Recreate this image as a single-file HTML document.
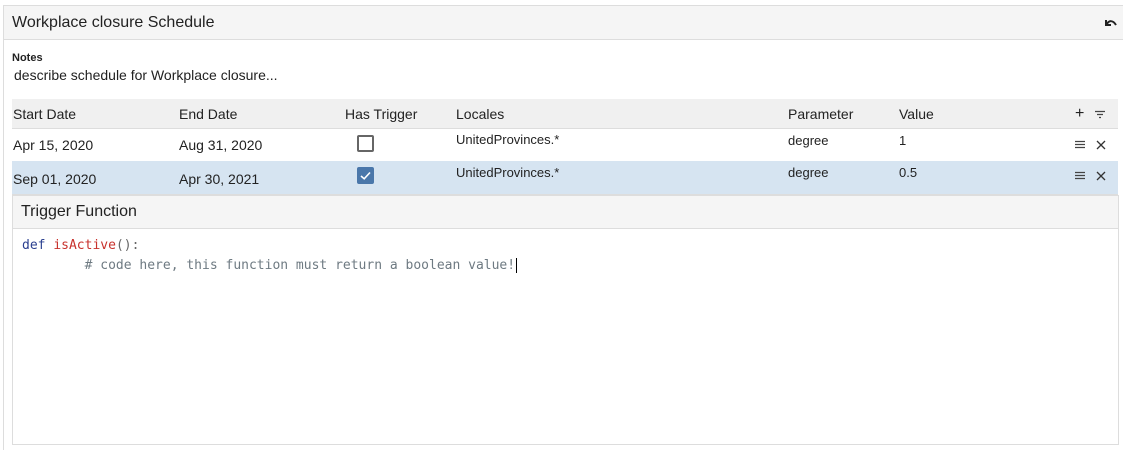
<!DOCTYPE html><html><head><style>
html,body{margin:0;width:1123px;height:450px;overflow:hidden}
body{background:#fff;font-family:"Liberation Sans",sans-serif;color:#222;position:relative}
.card{position:absolute;left:3px;top:5px;width:1120px;height:445px;border:1px solid #ddd;border-right:none;border-bottom:none;box-sizing:border-box}
.hd{position:absolute;left:0;top:0;right:0;height:33px;background:#f5f5f5;border-bottom:1px solid #ddd;font-size:16px;line-height:33px;padding-left:8px}
.a{position:absolute;white-space:nowrap}
.th{position:absolute;left:12px;top:99px;width:1106px;height:29px;background:#f0f0f0;border-bottom:1px solid #ddd}
.r2{position:absolute;left:12px;top:161px;width:1106px;height:33px;background:#d6e4f1;border-bottom:1px solid #ddd}
.ed{position:absolute;left:12px;top:195px;width:1107px;height:250px;border:1px solid #ddd;box-sizing:border-box}
.edh{height:32px;background:#f5f5f5;border-bottom:1px solid #ddd;font-size:16px;line-height:32px;padding-left:8px}
.code{font-family:"DejaVu Sans Mono","Liberation Mono",monospace;font-size:13px;position:absolute;left:9px;white-space:pre}
.cb{position:absolute;left:357px;width:17px;height:17px;box-sizing:border-box;border:2px solid #666;border-radius:2px}
</style></head><body>
<div class="card"><div class="hd">Workplace closure Schedule</div>
<svg class="a" style="left:1099px;top:10px" width="16" height="14" viewBox="0 0 16 14"><path d="M3 4 L3 9 L8 9 M3.5 8.5 C6 4 10 4 13 9" fill="none" stroke="#222" stroke-width="2"/></svg>
</div>
<div class="a" style="left:12px;top:52px;font-size:11px;font-weight:bold">Notes</div>
<div class="a" style="left:14px;top:67px;font-size:14px">describe schedule for Workplace closure...</div>
<div class="th"></div><div class="r2"></div>
<div class="a" style="left:13px;top:106px;font-size:14px">Start Date</div>
<div class="a" style="left:179px;top:106px;font-size:14px">End Date</div>
<div class="a" style="left:345px;top:106px;font-size:14px">Has Trigger</div>
<div class="a" style="left:456px;top:106px;font-size:14px">Locales</div>
<div class="a" style="left:788px;top:106px;font-size:14px">Parameter</div>
<div class="a" style="left:899px;top:106px;font-size:14px">Value</div>
<div class="a" style="left:1075px;top:105px;font-size:16px">+</div>
<svg class="a" style="left:1094px;top:110px" width="12" height="9"><path d="M1 1.5H11M3 4.5H9M5 7.5H7" stroke="#444" stroke-width="1.2"/></svg>
<div class="a" style="left:13px;top:137px;font-size:14px">Apr 15, 2020</div>
<div class="a" style="left:179px;top:137px;font-size:14px">Aug 31, 2020</div>
<div class="cb" style="top:135px"></div>
<div class="a" style="left:456px;top:132px;font-size:13px">UnitedProvinces.*</div>
<div class="a" style="left:788px;top:133px;font-size:13px">degree</div>
<div class="a" style="left:899px;top:133px;font-size:13px">1</div>
<div class="a" style="left:13px;top:171px;font-size:14px">Sep 01, 2020</div>
<div class="a" style="left:179px;top:171px;font-size:14px">Apr 30, 2021</div>
<div class="cb" style="top:167px;background:#4a77aa;border-color:#4a77aa"><svg width="13" height="13" style="position:absolute;left:0;top:0"><path d="M2 7L5.2 9.8L11 3.5" fill="none" stroke="#fff" stroke-width="1.6"/></svg></div>
<div class="a" style="left:456px;top:165px;font-size:13px">UnitedProvinces.*</div>
<div class="a" style="left:788px;top:165px;font-size:13px">degree</div>
<div class="a" style="left:899px;top:165px;font-size:13px">0.5</div>
<svg class="a" style="left:1074px;top:140px" width="34" height="10"><path d="M1 1.5H11M1 4.5H11M1 7.5H11" stroke="#444" stroke-width="1.2"/><path d="M23 1L31 9M31 1L23 9" stroke="#333" stroke-width="1.3"/></svg>
<svg class="a" style="left:1074px;top:171px" width="34" height="10"><path d="M1 1.5H11M1 4.5H11M1 7.5H11" stroke="#444" stroke-width="1.2"/><path d="M23 1L31 9M31 1L23 9" stroke="#333" stroke-width="1.3"/></svg>
<div class="ed"><div class="edh">Trigger Function</div>
<div class="code" style="top:42px"><span style="color:#2a3f8f">def</span> <span style="color:#c8322d">isActive</span><span style="color:#666">():</span></div>
<div class="code" style="top:62px;color:#6e7a82">        # code here, this function must return a boolean value!<span style="border-left:1.5px solid #000;margin-left:1px"></span></div>
</div>
</body></html>
